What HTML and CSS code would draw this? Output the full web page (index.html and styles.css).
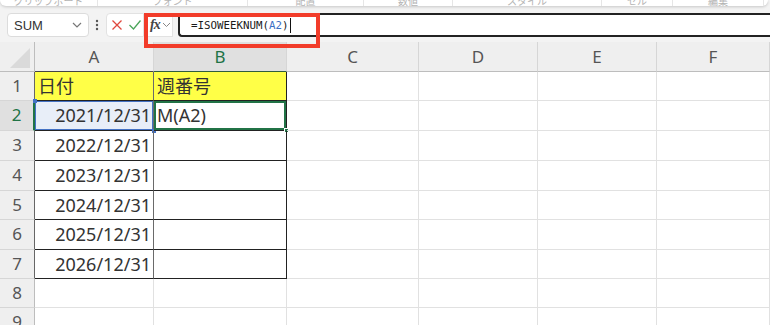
FILE: index.html
```html
<!DOCTYPE html>
<html lang="ja">
<head>
    <meta charset="utf-8">
    <title>ISOWEEKNUM</title>
    <link rel="stylesheet" href="styles.css">
</head>
<body>
    <div class="ribbon">
        <span class="grp" style="width:97px">クリップボード</span>
        <span class="grp" style="width:149px">フォント</span>
        <span class="grp" style="width:115px">配置</span>
        <span class="grp" style="width:88px">数値</span>
        <span class="grp" style="width:148px">スタイル</span>
        <span class="grp" style="width:70px">セル</span>
        <span class="grp" style="width:90px">編集</span>
    </div>

    <div class="fbar">
        <div class="namebox">
            <span>SUM</span>
            <svg width="10" height="6" viewBox="0 0 10 6"><polyline points="1,1 5,5 9,1" fill="none" stroke="#777" stroke-width="1.2"/></svg>
        </div>
        <svg class="dots" width="4" height="12" viewBox="0 0 4 12"><circle cx="2" cy="2" r="1.2" fill="#555"/><circle cx="2" cy="6" r="1.2" fill="#555"/><circle cx="2" cy="10" r="1.2" fill="#555"/></svg>
        <div class="btns">
            <svg width="10" height="10" viewBox="0 0 10 10"><path d="M0.5 0.5L9.5 9.5M9.5 0.5L0.5 9.5" stroke="#e0483e" stroke-width="1.3"/></svg>
            <svg width="12" height="10" viewBox="0 0 12 10"><polyline points="0.5,5 4.5,9 11.5,0.5" fill="none" stroke="#4aa55a" stroke-width="1.3"/></svg>
        </div>
        <div class="fx">
            <i>fx</i>
            <svg width="9" height="6" viewBox="0 0 9 6"><polyline points="1,1 4.5,4.5 8,1" fill="none" stroke="#888" stroke-width="1"/></svg>
        </div>
        <div class="finput">=ISOWEEKNUM(<span class="ref">A2</span>)<span class="caret"></span></div>
        <div class="mark"></div>
    </div>

    <div class="sheet">
        <div class="h corner"><svg width="20" height="20" viewBox="0 0 20 20"><polygon points="20,0 20,20 0,20" fill="#dadada"/></svg></div>
        <div class="h top">A</div>
        <div class="h top sel">B</div>
        <div class="h">C</div>
        <div class="h">D</div>
        <div class="h">E</div>
        <div class="h">F</div>

        <div class="r in">1</div>
        <div class="c t ca yel">日付</div>
        <div class="c t yel">週番号</div>
        <div class="c"></div><div class="c"></div><div class="c"></div><div class="c"></div>

        <div class="r in rsel">2</div>
        <div class="c t ca num refcell">2021/12/31</div>
        <div class="c t active">M(A2)</div>
        <div class="c"></div><div class="c"></div><div class="c"></div><div class="c"></div>

        <div class="r in">3</div>
        <div class="c t ca num">2022/12/31</div>
        <div class="c t"></div>
        <div class="c"></div><div class="c"></div><div class="c"></div><div class="c"></div>

        <div class="r in">4</div>
        <div class="c t ca num">2023/12/31</div>
        <div class="c t"></div>
        <div class="c"></div><div class="c"></div><div class="c"></div><div class="c"></div>

        <div class="r in">5</div>
        <div class="c t ca num">2024/12/31</div>
        <div class="c t"></div>
        <div class="c"></div><div class="c"></div><div class="c"></div><div class="c"></div>

        <div class="r in">6</div>
        <div class="c t ca num">2025/12/31</div>
        <div class="c t"></div>
        <div class="c"></div><div class="c"></div><div class="c"></div><div class="c"></div>

        <div class="r in">7</div>
        <div class="c t ca num">2026/12/31</div>
        <div class="c t"></div>
        <div class="c"></div><div class="c"></div><div class="c"></div><div class="c"></div>

        <div class="r">8</div>
        <div class="c"></div><div class="c"></div><div class="c"></div><div class="c"></div><div class="c"></div><div class="c"></div>

        <div class="r">9</div>
        <div class="c"></div><div class="c"></div><div class="c"></div><div class="c"></div><div class="c"></div><div class="c"></div>
    </div>
</body>
</html>
```

FILE: styles.css
```css
html, body {
    margin: 0;
    padding: 0;
}

body {
    width: 770px;
    height: 325px;
    overflow: hidden;
    background-color: #f3f3f3;
    font-family: "Noto Sans", "Noto Sans CJK JP", sans-serif;
    color: #333;
}

/* bottom edge of the ribbon */
.ribbon {
    height: 6px;
    margin-right: 2px;
    background-color: #fff;
    border-radius: 0 0 8px 8px;
    box-shadow: 0 1px 3px rgba(0,0,0,0.18);
    display: flex;
    align-items: flex-end;
    overflow: hidden;
}

.grp {
    flex: none;
    font-size: 10px;
    line-height: 9px;
    color: #b4b4b4;
    text-align: center;
    border-right: 1px solid #e6e6e6;
}

/* formula bar */
.fbar {
    position: relative;
    display: flex;
    align-items: center;
    height: 24px;
    padding: 7px 0 5px 7px;
}

.namebox {
    width: 82px;
    height: 24px;
    box-sizing: border-box;
    display: flex;
    align-items: center;
    justify-content: space-between;
    padding: 0 6px 0 6px;
    background-color: #fff;
    border: 1px solid #dcdcdc;
    border-radius: 4px;
    font-family: "Liberation Sans", sans-serif;
    font-size: 13px;
    color: #333;
}

.dots {
    margin: 0 7px 0 6px;
}

.btns {
    width: 38px;
    height: 24px;
    box-sizing: border-box;
    display: flex;
    align-items: center;
    gap: 7px;
    padding-left: 5px;
    background-color: #fff;
    border: 1px solid #e2e2e2;
    border-radius: 4px 0 0 4px;
}

.fx {
    width: 27px;
    height: 24px;
    box-sizing: border-box;
    margin-left: 2px;
    display: flex;
    align-items: center;
    gap: 2px;
    padding-left: 3px;
    background-color: #fff;
    border: 1px solid #e2e2e2;
}

.fx i {
    font-family: "Liberation Serif", serif;
    font-size: 14px;
    font-weight: bold;
    color: #444;
    letter-spacing: -1px;
}

.finput {
    flex: 1;
    height: 24px;
    box-sizing: border-box;
    margin-left: 5px;
    display: flex;
    align-items: center;
    padding-left: 11px;
    background-color: #fff;
    border: 2px solid #222;
    border-right: none;
    border-radius: 4px 0 0 4px;
    font-family: "DejaVu Sans Mono", monospace;
    font-size: 10.8px;
    color: #1a1a1a;
}

.finput .ref {
    color: #3b6fc4;
}

.caret {
    width: 1px;
    height: 15px;
    margin-left: 1px;
    background-color: #111;
}

/* red annotation frame */
.mark {
    position: absolute;
    left: 144px;
    top: 7px;
    width: 168px;
    height: 27px;
    border: 4px solid #f23c2a;
}

/* grid */
.sheet {
    display: grid;
    grid-template-columns: 35px 119px 133px 132px 119px 119px 113px;
    grid-template-rows: 30px 29px 30px 30px 30px 29px 30px 29px 29px 29px;
    background-color: #fff;
}

.h, .r, .c {
    box-sizing: border-box;
    white-space: nowrap;
}

.h {
    background-color: #efefef;
    border-right: 1px solid #d6d6d6;
    border-bottom: 1px solid #bdbdbd;
    text-align: center;
    font-size: 17px;
    line-height: 30px;
    color: #555;
}

.h.top {
    border-bottom-color: #444;
}

.h.sel {
    background-color: #e0e0e0;
    color: #217346;
    border-bottom: 1px solid #2f5d3d;
}

.corner {
    display: flex;
    align-items: flex-end;
    justify-content: flex-end;
    padding: 0 4px 3px 0;
    border-right-color: #bdbdbd;
}

.r {
    background-color: #efefef;
    border-right: 1px solid #bdbdbd;
    border-bottom: 1px solid #d6d6d6;
    text-align: center;
    font-size: 17px;
    line-height: 28px;
    color: #555;
}

.r.in {
    border-right-color: #666;
}

.r.rsel {
    background-color: #e0e0e0;
    color: #217346;
    border-right: 2px solid #217346;
}

.c {
    position: relative;
    border-right: 1px solid #e1e1e1;
    border-bottom: 1px solid #e1e1e1;
    padding: 0 3px;
    font-size: 18px;
    line-height: 28px;
    color: #333;
}

.c.t {
    border-right-color: #222;
    border-bottom-color: #222;
}

.c.ca {
    border-right-color: #6a6a6a;
}

.yel {
    background-color: #ffff47;
}

.num {
    text-align: right;
    padding-right: 2px;
}

/* range reference (A2) */
.refcell {
    background-color: #e8eef8;
    box-shadow: inset 0 0 0 1px #4472c4;
}

.refcell::before, .refcell::after {
    content: "";
    position: absolute;
    width: 4px;
    height: 4px;
    background-color: #4472c4;
}

.refcell::before {
    left: -2px;
    top: -2px;
}

.refcell::after {
    right: -3px;
    bottom: -3px;
}

/* active cell (B2) */
.active {
    box-shadow: inset 0 0 0 2px #217346;
}

.active::after {
    content: "";
    position: absolute;
    right: -3px;
    bottom: -3px;
    width: 5px;
    height: 5px;
    background-color: #217346;
    border: 1px solid #fff;
    box-sizing: border-box;
}
```
